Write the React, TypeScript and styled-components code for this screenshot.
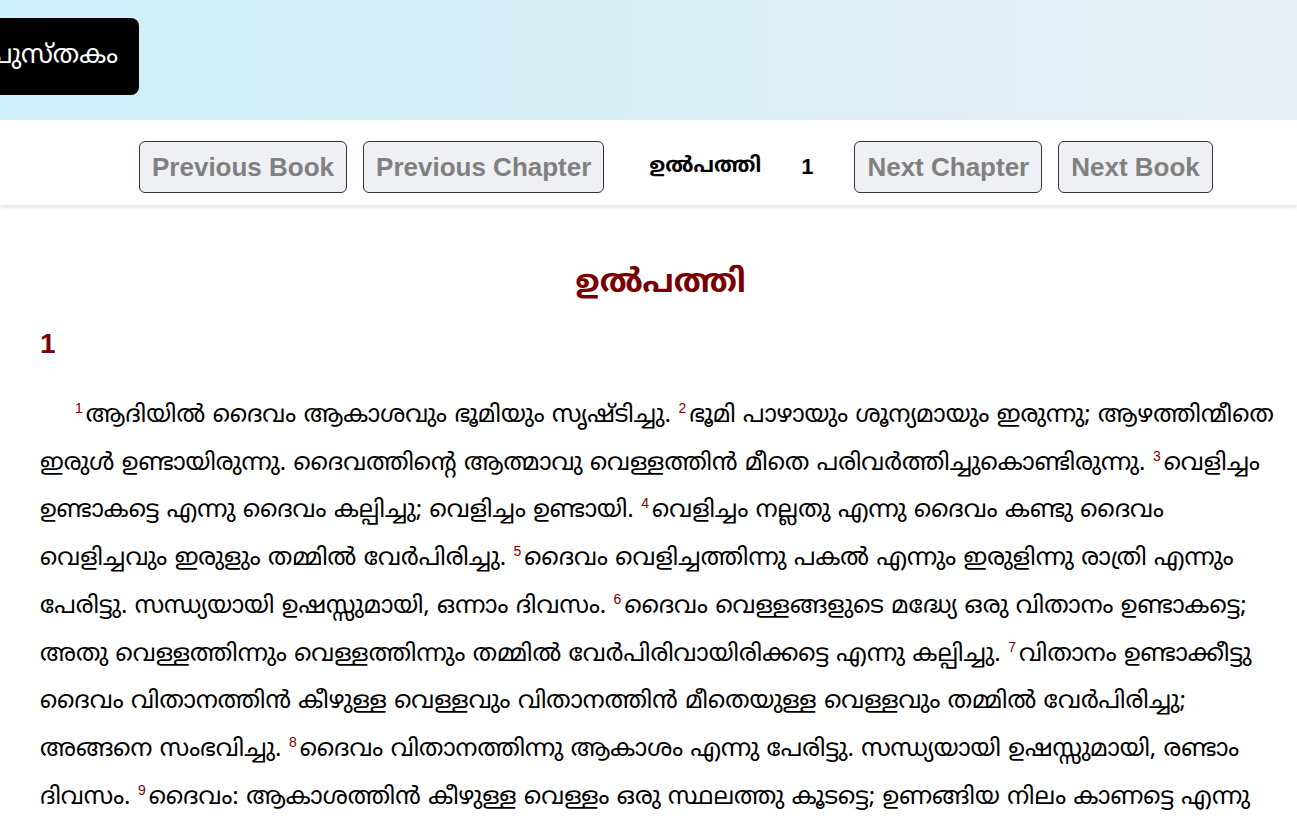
import React from "react";
import styled, { createGlobalStyle } from "styled-components";

const Global = createGlobalStyle`
  html, body { margin: 0; padding: 0; background: #fff; }
  body { font-family: "Noto Sans Malayalam", "Noto Sans", "DejaVu Sans", sans-serif; color: #000; overflow: hidden; }
`;

const Header = styled.header`
  height: 120px;
  background: linear-gradient(90deg, #cfeffa 0%, #daeef6 55%, #e8eff2 100%);
  display: flex;
  align-items: flex-start;
  overflow: hidden;
`;

const Logo = styled.div`
  margin-top: 18px;
  margin-left: -20px;
  width: 159px;
  height: 77px;
  background: #000;
  border-radius: 8px;
  display: flex;
  align-items: center;
  justify-content: flex-end;
  overflow: hidden;
  padding-right: 21px;
  box-sizing: border-box;
  color: #fff;
  font-size: 26px;
  white-space: nowrap;
`;

const NavBar = styled.nav`
  height: 85px;
  background: #fff;
  box-shadow: 0 2px 4px rgba(0, 0, 0, 0.12);
  display: flex;
  align-items: center;
  padding: 9px 0 0 139px;
  box-sizing: border-box;
  position: relative;
`;

const NavButton = styled.button`
  height: 52px;
  padding: 0 12px;
  margin-right: 16px;
  background: #eef0f3;
  border: 1px solid #333;
  border-radius: 6px;
  color: #808080;
  font-family: "Liberation Sans", Arial, sans-serif;
  font-weight: 700;
  font-size: 26px;
`;

const NavTitle = styled.span`
  font-weight: 700;
  font-size: 21px;
  margin-left: 29px;
`;

const NavNum = styled.span`
  font-weight: 700;
  font-size: 22px;
  font-family: "Liberation Sans Narrow", "Liberation Sans", Arial, sans-serif;
  margin: 0 41px 0 40px;
`;

const Main = styled.main`
  padding: 0 16px 0 40px;
`;

const Heading = styled.h1`
  margin: 55px 0 0;
  text-align: center;
  color: #7a0000;
  font-size: 32px;
  font-weight: 700;
  line-height: 48px;
`;

const ChapterNum = styled.h2`
  margin: 16px 0 0;
  color: #7a0000;
  font-size: 28px;
  font-weight: 700;
  font-family: "Liberation Sans Narrow", "Liberation Sans", Arial, sans-serif;
  line-height: 40px;
`;

const Para = styled.p`
  margin: 29px 0 0;
  text-indent: 35px;
  font-size: 24px;
  line-height: 47.7px;
`;

const VerseNum = styled.sup`
  color: #7a0000;
  font-size: 14px;
  line-height: 0;
  font-family: "Liberation Sans", Arial, sans-serif;
  margin-right: 3px;
`;

const verses = [
  "ആദിയിൽ ദൈവം ആകാശവും ഭൂമിയും സൃഷ്ടിച്ചു.",
  "ഭൂമി പാഴായും ശൂന്യമായും ഇരുന്നു; ആഴത്തിന്മീതെ ഇരുൾ ഉണ്ടായിരുന്നു. ദൈവത്തിന്റെ ആത്മാവു വെള്ളത്തിൻ മീതെ പരിവർത്തിച്ചുകൊണ്ടിരുന്നു.",
  "വെളിച്ചം ഉണ്ടാകട്ടെ എന്നു ദൈവം കല്പിച്ചു; വെളിച്ചം ഉണ്ടായി.",
  "വെളിച്ചം നല്ലതു എന്നു ദൈവം കണ്ടു ദൈവം വെളിച്ചവും ഇരുളും തമ്മിൽ വേർപിരിച്ചു.",
  "ദൈവം വെളിച്ചത്തിന്നു പകൽ എന്നും ഇരുളിന്നു രാത്രി എന്നും പേരിട്ടു. സന്ധ്യയായി ഉഷസ്സുമായി, ഒന്നാം ദിവസം.",
  "ദൈവം വെള്ളങ്ങളുടെ മദ്ധ്യേ ഒരു വിതാനം ഉണ്ടാകട്ടെ; അതു വെള്ളത്തിന്നും വെള്ളത്തിന്നും തമ്മിൽ വേർപിരിവായിരിക്കട്ടെ എന്നു കല്പിച്ചു.",
  "വിതാനം ഉണ്ടാക്കീട്ടു ദൈവം വിതാനത്തിൻ കീഴുള്ള വെള്ളവും വിതാനത്തിൻ മീതെയുള്ള വെള്ളവും തമ്മിൽ വേർപിരിച്ചു; അങ്ങനെ സംഭവിച്ചു.",
  "ദൈവം വിതാനത്തിന്നു ആകാശം എന്നു പേരിട്ടു. സന്ധ്യയായി ഉഷസ്സുമായി, രണ്ടാം ദിവസം.",
  "ദൈവം: ആകാശത്തിൻ കീഴുള്ള വെള്ളം ഒരു സ്ഥലത്തു കൂടട്ടെ; ഉണങ്ങിയ നിലം കാണട്ടെ എന്നു കല്പിച്ചു; അങ്ങനെ സംഭവിച്ചു.",
  "ദൈവം ഉണങ്ങിയ നിലത്തിന്നു ഭൂമി എന്നും വെള്ളത്തിന്റെ കൂട്ടത്തിന്നു സമുദ്രം എന്നും പേരിട്ടു; നല്ലതു എന്നു ദൈവം കണ്ടു.",
];

export default function App() {
  return (
    <>
      <Global />
      <Header>
        <Logo>സത്യവേദപുസ്തകം</Logo>
      </Header>
      <NavBar>
        <NavButton>Previous Book</NavButton>
        <NavButton>Previous Chapter</NavButton>
        <NavTitle>ഉൽപത്തി</NavTitle>
        <NavNum>1</NavNum>
        <NavButton>Next Chapter</NavButton>
        <NavButton>Next Book</NavButton>
      </NavBar>
      <Main>
        <Heading>ഉൽപത്തി</Heading>
        <ChapterNum>1</ChapterNum>
        <Para>
          {verses.map((v, i) => (
            <React.Fragment key={i}>
              <VerseNum>{i + 1}</VerseNum>
              {v}{" "}
            </React.Fragment>
          ))}
        </Para>
      </Main>
    </>
  );
}
